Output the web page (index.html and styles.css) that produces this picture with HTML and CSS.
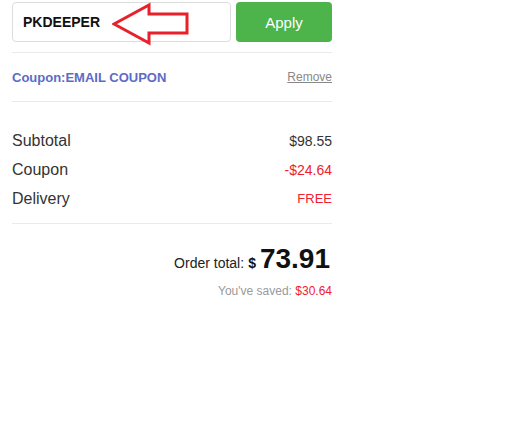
FILE: index.html
```html
<!DOCTYPE html>
<html>
<head>
<meta charset="utf-8">
<link rel="stylesheet" href="styles.css">
</head>
<body>
<div class="cart">
  <div class="coupon-form">
    <div class="code-input">
      <span class="code">PKDEEPER</span>
      <svg class="arrow" width="80" height="46" viewBox="0 0 80 46">
        <polygon points="2,22 37,3 37,12 75,12 75,31 37,31 37,41" fill="none" stroke="#e8202a" stroke-width="3" stroke-linejoin="miter"/>
      </svg>
    </div>
    <button class="apply">Apply</button>
  </div>
  <div class="coupon-row">
    <span class="coupon-name">Coupon:EMAIL COUPON</span>
    <span class="remove">Remove</span>
  </div>
  <div class="lines">
    <div class="line"><span class="label">Subtotal</span><span class="val">$98.55</span></div>
    <div class="line"><span class="label">Coupon</span><span class="val red">-$24.64</span></div>
    <div class="line"><span class="label">Delivery</span><span class="val red small">FREE</span></div>
  </div>
  <div class="total">
    <span class="total-label">Order total:</span>
    <span class="cur">$</span>
    <span class="amount">73.91</span>
  </div>
  <div class="saved">You've saved: <span class="red">$30.64</span></div>
</div>
</body>
</html>
```
FILE: styles.css
```css
body {
  margin: 0;
  font-family: "Liberation Sans", Arial, sans-serif;
  background: #fff;
  color: #333;
}
.cart {
  width: 320px;
  margin-left: 12px;
  padding-top: 2px;
}
.coupon-form {
  display: flex;
  gap: 5px;
  padding-bottom: 10px;
  border-bottom: 1px solid #eaeaea;
}
.code-input {
  position: relative;
  width: 219px;
  height: 40px;
  box-sizing: border-box;
  border: 1px solid #ddd;
  border-radius: 4px;
  display: flex;
  align-items: center;
  padding-left: 10px;
}
.code {
  font-weight: bold;
  font-size: 14px;
  color: #111;
}
.arrow {
  position: absolute;
  left: 99px;
  top: -1px;
}
.apply {
  width: 96px;
  height: 40px;
  border: none;
  border-radius: 4px;
  background: #4db34b;
  color: #fff;
  font-family: "Liberation Sans", Arial, sans-serif;
  font-size: 15px;
  padding: 0;
}
.coupon-row {
  display: flex;
  justify-content: space-between;
  align-items: center;
  height: 48px;
  border-bottom: 1px solid #eaeaea;
}
.coupon-name {
  font-weight: bold;
  font-size: 13px;
  color: #5b6cc5;
}
.remove {
  font-size: 12px;
  color: #888;
  text-decoration: underline;
}
.lines {
  padding-top: 24px;
  padding-bottom: 10px;
  border-bottom: 1px solid #eaeaea;
}
.line {
  display: flex;
  justify-content: space-between;
  align-items: center;
  height: 29px;
}
.label {
  font-size: 16px;
  color: #333;
}
.val {
  font-size: 14px;
  color: #333;
}
.val.small {
  font-size: 13px;
}
.red {
  color: #f0202e;
}
.total {
  display: flex;
  justify-content: flex-end;
  align-items: baseline;
  gap: 4px;
  padding-top: 19px;
  padding-right: 2px;
}
.total-label {
  font-size: 14px;
  color: #222;
}
.cur {
  font-weight: bold;
  font-size: 14px;
  color: #111;
}
.amount {
  font-weight: bold;
  font-size: 28px;
  color: #111;
}
.saved {
  text-align: right;
  font-size: 12px;
  color: #999;
  margin-top: 9px;
}
```
